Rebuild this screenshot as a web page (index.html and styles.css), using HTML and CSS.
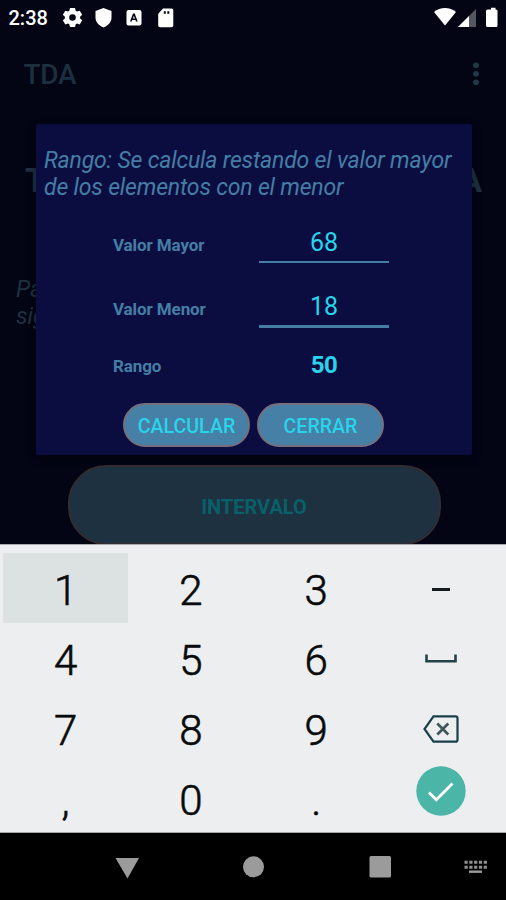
FILE: index.html
```html
<!DOCTYPE html>
<html lang="es">
<head>
<meta charset="utf-8">
<title>TDA</title>
<link rel="stylesheet" href="styles.css">
</head>
<body>
<div class="phone">
  <main class="app">
    <div class="status">
      <span class="clock">2:38</span>
      <svg class="tray" width="115" height="24" viewBox="0 0 115 24" fill="#fff">
        <path fill-rule="evenodd" d="M8 3h5l.7 2.8 1.4.8 2.6-.9 2.5 4.1-2.1 1.9v1.700l2.100 1.900-2.500 4.100-2.600-.9-1.400.8L13 22H8l-.7-2.700-1.400-.8-2.600.9L.800 15.300l2.100-1.900v-1.700L.800 9.800l2.500-4.100 2.600.9 1.400-.8zM10.500 9.200a3.300 3.300 0 1 0 0 6.600 3.300 3.300 0 0 0 0-6.600z"/>
        <path d="M41.500 3l8 3v6.500c0 4.500-3.300 8.300-8 9.900-4.700-1.600-8-5.400-8-9.900V6z"/>
        <path fill-rule="evenodd" d="M66.500 5h11a2 2 0 0 1 2 2v11.500a2 2 0 0 1-2 2h-11a2 2 0 0 1-2-2V7a2 2 0 0 1 2-2zM71 8.500l-3 8h1.700l.5-1.600h3.300l.5 1.600h1.700l-3-8zm.9 2.300 1 2.700h-2z"/>
        <path fill-rule="evenodd" d="M101 3.500h8.500a1.800 1.800 0 0 1 1.800 1.800v15.200a1.800 1.800 0 0 1-1.800 1.800H98a1.800 1.800 0 0 1-1.800-1.800V8.800zm.8 2.700v2.500h2V6.200zm3.500 0v2.500h2V6.200z"/>
      </svg>
      <svg class="signal" width="68" height="24" viewBox="0 0 68 24" fill="#fff">
        <path d="M2 7C8 1.800 18 1.800 24 7L13 20.500z"/>
        <path d="M44 4v18H26z" opacity=".33"/>
        <path d="M37 11v11h-11z"/>
        <path d="M56 4.500V2.800h4.500v1.700h.5a1.500 1.500 0 0 1 1.500 1.500v14.500a1.500 1.500 0 0 1-1.500 1.500h-8.500a1.500 1.500 0 0 1-1.500-1.500V6a1.500 1.500 0 0 1 1.500-1.500z" transform="translate(3 0)"/>
      </svg>
    </div>
    <header class="bar">
      <h1 class="bar-title">TDA</h1>
      <svg width="6" height="24" viewBox="0 0 6 24" fill="#203947"><circle cx="3" cy="3.300" r="2.900"/><circle cx="3" cy="11.800" r="2.900"/><circle cx="3" cy="20.300" r="2.900"/></svg>
    </header>
    <div class="headline"><span>T</span><span>A</span></div>
    <p class="intro">Pa<br>sig</p>
    <button class="wide">INTERVALO</button>

    <section class="dialog">
      <p class="about">Rango: Se calcula restando el valor mayor<br>de los elementos con el menor</p>
      <div class="fields">
        <div class="row"><span class="label">Valor Mayor</span><span class="value">68</span></div>
        <div class="row"><span class="label">Valor Menor</span><span class="value focused">18</span></div>
        <div class="row result"><span class="label">Rango</span><span class="total">50</span></div>
      </div>
      <div class="actions"><button class="pill">CALCULAR</button><button class="pill">CERRAR</button></div>
    </section>
  </main>

  <div class="keys">
    <span class="key pressed">1</span><span class="key">2</span><span class="key">3</span>
    <span class="key"><svg width="18" height="4"><rect width="18" height="3" y="1" fill="#151c1d"/></svg></span>
    <span class="key">4</span><span class="key">5</span><span class="key">6</span>
    <span class="key"><svg width="32" height="10" viewBox="0 0 32 10" fill="none" stroke="#244149" stroke-width="2.600"><path d="M1.500 .5v6.800h29V.5"/></svg></span>
    <span class="key">7</span><span class="key">8</span><span class="key">9</span>
    <span class="key"><svg width="36" height="28" viewBox="0 0 36 28" fill="none" stroke="#17404a" stroke-width="2.200"><path d="M10.500 1.300H32.500a2 2 0 0 1 2 2v21.400a2 2 0 0 1-2 2H10.500L1.500 14z"/><path d="M14.300 8.500l11 11m0-11l-11 11" stroke="#3f5559" stroke-width="2.600"/></svg></span>
    <span class="key">,</span><span class="key">0</span><span class="key">.</span>
    <span class="key"><svg class="done" width="50" height="50" viewBox="0 0 50 50"><circle cx="25" cy="25" r="24.700" fill="#4bb5a8"/><path d="M13 26.500l7.300 7.300L36.500 17.500" fill="none" stroke="#fff" stroke-width="2.800"/></svg></span>
  </div>

  <nav class="nav">
    <svg width="506" height="67" viewBox="0 0 506 67" fill="#9b9b9b">
      <path d="M115.500 25h23.500l-11.500 20.500z"/>
      <circle cx="253.500" cy="33.800" r="10.500"/>
      <rect x="369.500" y="23" width="21.500" height="21.500" rx="1.500"/>
      <path d="M464.500 29.200h22.500M464.500 34.200h22.500" stroke="#8f8f8f" stroke-width="3" stroke-dasharray="3.200 1.600"/>
      <rect x="469" y="37.500" width="13" height="2.400" fill="#9b9b9b"/>
    </svg>
  </nav>
</div>
</body>
</html>
```
FILE: styles.css
```css
* { box-sizing: border-box; }
body { margin: 0; background: #000; font-family: Roboto, "Liberation Sans", sans-serif; }
svg { display: block; flex: none; }
button { font-family: inherit; padding: 0; margin: 0; }
.phone { width: 506px; height: 900px; display: flex; flex-direction: column; overflow: hidden; }
.app { position: relative; height: 544px; background: #030414; overflow: hidden; flex: none; }
.status { height: 36px; display: flex; padding: 5px 6px 0 8.5px; color: #fff; }
.clock { font-size: 20px; font-weight: 500; line-height: 27px; width: 53.5px; }
.signal { margin-left: auto; }
.bar { height: 76px; display: flex; align-items: center; justify-content: space-between; padding: 0 27px 0 23.5px; }
.bar-title { margin: 0; font-size: 28px; font-weight: 500; letter-spacing: -.3px; color: #1b303f; }
.headline { margin: 50px 24px 0 25px; display: flex; justify-content: space-between; font-size: 34px; line-height: 36px; font-weight: 700; color: #1c3040; }
.intro { margin: 78px 0 0 16px; font-size: 23px; line-height: 27px; font-style: italic; color: #1e3240; }
.wide { display: block; width: 373px; height: 80px; margin: 135px auto 0 67.5px; border: 2px solid #332c31; border-radius: 38px; background: #1d3140; color: #08606a; font-size: 20px; font-weight: 700; padding-top: 4px; }
.dialog { position: absolute; left: 36px; top: 124px; width: 435.5px; height: 331px; padding-top: 23px; border-radius: 2px; background: #0b0d40; box-shadow: 0 4px 10px rgba(0, 0, 0, .4); }
.about { margin: 0 0 0 8px; font-size: 23px; line-height: 27px; letter-spacing: -.17px; font-style: italic; color: #457ea5; white-space: nowrap; }
.fields { padding: 17px 82.5px 0 77px; }
.row { height: 64px; display: flex; justify-content: space-between; align-items: flex-start; }
.label { font-size: 17px; line-height: 20px; letter-spacing: -.1px; font-weight: 700; color: #457ea5; margin-top: 17px; }
.value, .total { width: 130px; text-align: center; color: #28d4ea; }
.value { height: 44.500px; padding-top: 10px; font-size: 25px; line-height: 30px; border-bottom: 2px solid #457ea5; }
.value.focused { height: 45.500px; border-bottom-width: 3px; }
.result { height: 62px; }
.result .label { margin-top: 10px; }
.total { font-size: 24px; line-height: 28px; letter-spacing: -.5px; font-weight: 700; padding-top: 5px; }
.actions { display: flex; gap: 7px; padding-left: 87px; margin-top: -5px; }
.pill { width: 127px; height: 44px; border: 2px solid #766f7b; border-radius: 22px; background: #4680a6; color: #28d4ea; font-size: 19.600px; font-weight: 500; padding-top: 2px; }
.keys { flex: none; height: 289px; display: grid; grid-template-columns: repeat(4, 125.300px); grid-template-rows: repeat(4, 70px); padding: 8px 0 0 3px; background: #eceef0; border-top: 1px solid #a6a9ab; border-bottom: 1px solid #a6a9ab; font-size: 42px; font-weight: 300; color: #080a0b; -webkit-text-stroke: .6px #080a0b; }
.key { display: flex; align-items: center; justify-content: center; padding-top: 4px; }
.key svg { margin: -2px 1.500px 0 0; }
.pressed { background: #dce1e1; }
.key .done { margin-top: -19px; }
.nav { height: 67px; background: #000; }
```
